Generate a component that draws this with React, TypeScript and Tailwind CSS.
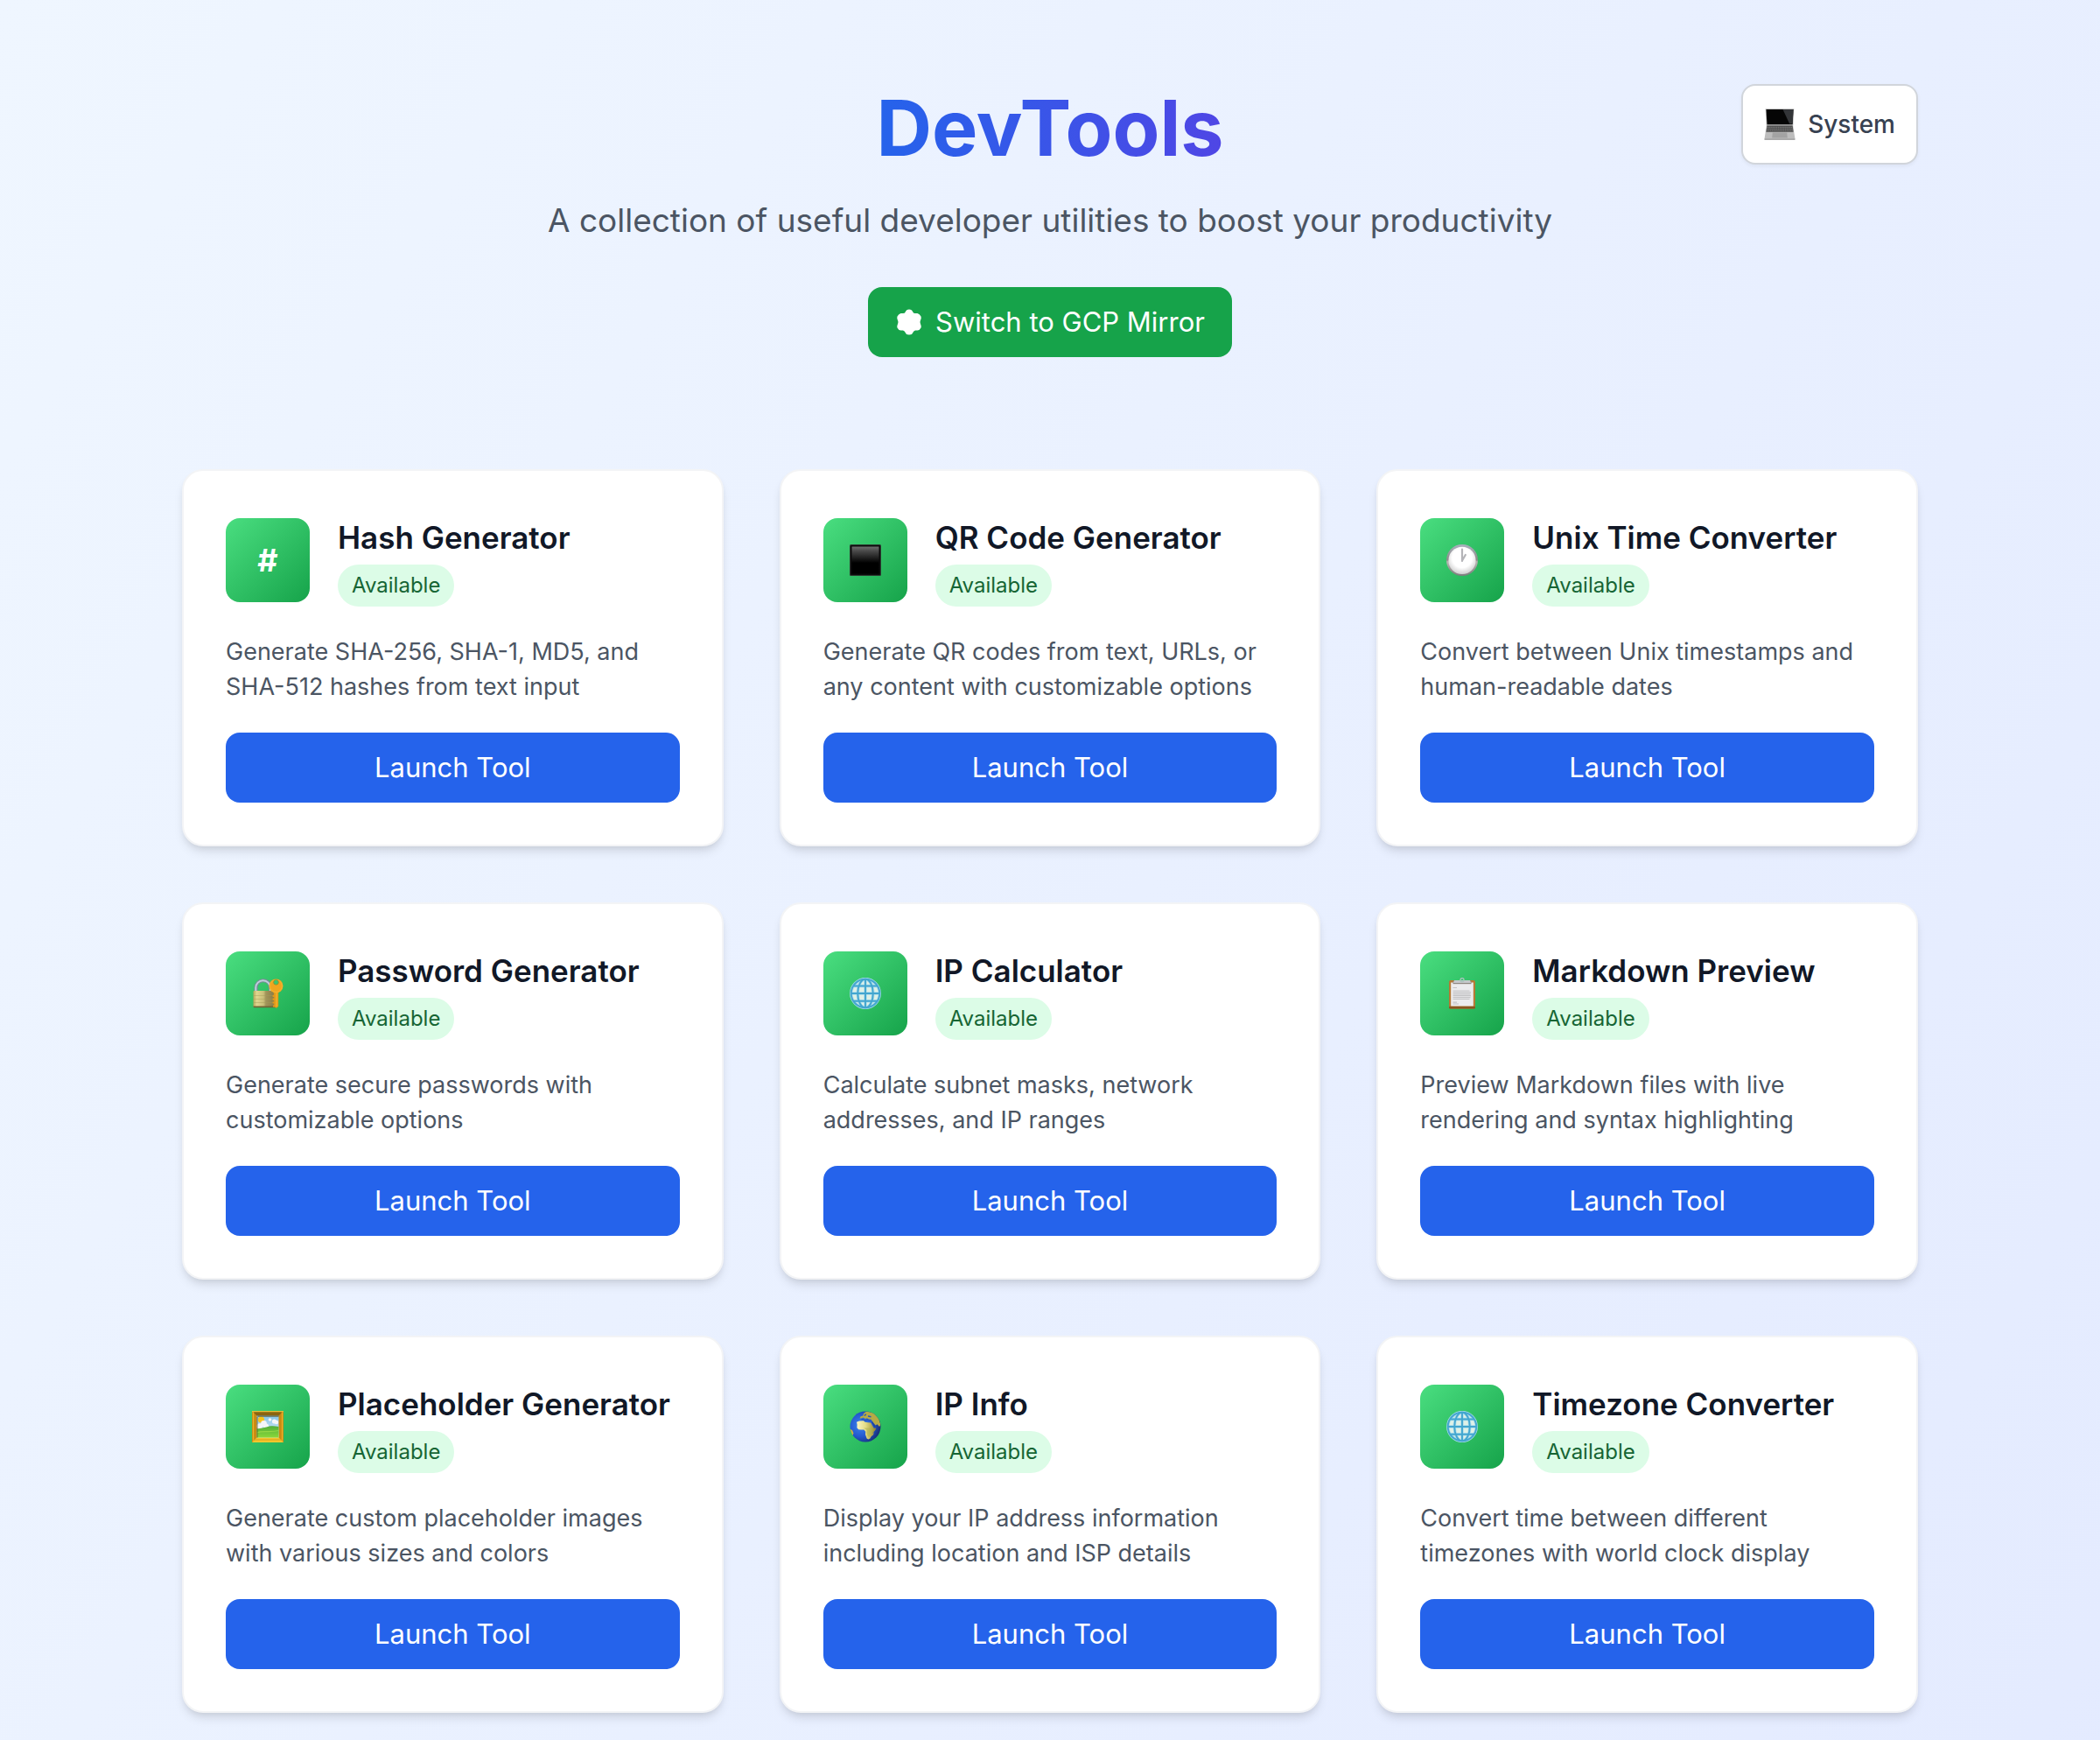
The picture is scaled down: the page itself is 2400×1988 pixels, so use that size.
import type { ReactNode } from "react";

function HashIcon() {
  return <span className="text-4xl font-bold text-white">#</span>;
}

function BlackSquareIcon() {
  return (
    <svg viewBox="0 0 36 36" className="size-9" aria-hidden="true">
      <defs>
        <linearGradient id="square-shine" x1="0" y1="0" x2="0" y2="1">
          <stop offset="0" stopColor="#6e6e6e" />
          <stop offset="0.15" stopColor="#4c4c4c" />
          <stop offset="0.6" stopColor="#000" />
        </linearGradient>
      </defs>
      <rect x="0" y="0" width="36" height="36" rx="1.5" fill="#2c3a31" />
      <rect x="1" y="1" width="34" height="34" rx="1" fill="#0b0b0b" />
      <rect x="2.5" y="2.5" width="31" height="31" fill="url(#square-shine)" />
    </svg>
  );
}

function ClockIcon() {
  return (
    <svg viewBox="0 0 36 36" className="size-9" aria-hidden="true">
      <defs>
        <linearGradient id="clock-rim" x1="0" y1="0" x2="0" y2="1">
          <stop offset="0" stopColor="#a9b0bd" />
          <stop offset="0.5" stopColor="#8d8a88" />
          <stop offset="0.55" stopColor="#b9b6b3" />
          <stop offset="1" stopColor="#7c7c7c" />
        </linearGradient>
        <radialGradient id="clock-face" cx="0.5" cy="0.4" r="0.6">
          <stop offset="0.6" stopColor="#fff" />
          <stop offset="1" stopColor="#cfcfcf" />
        </radialGradient>
      </defs>
      <circle cx="18" cy="18" r="18" fill="url(#clock-rim)" />
      <circle cx="18" cy="18.4" r="15.6" fill="url(#clock-face)" />
      <path d="M18 19V5.500M18 18.500l3.800-6.500" fill="none" stroke="#b4b4b8" strokeWidth="2.2" strokeLinecap="round" />
    </svg>
  );
}

function LockIcon() {
  return (
    <svg viewBox="0 0 36 36" className="size-9" aria-hidden="true">
      <defs>
        <linearGradient id="lock-body" x1="0" y1="0" x2="1" y2="0">
          <stop offset="0" stopColor="#b5a75a" />
          <stop offset="0.15" stopColor="#e0d68f" />
          <stop offset="0.45" stopColor="#c9bd78" />
          <stop offset="0.55" stopColor="#a2945a" />
          <stop offset="1" stopColor="#857640" />
        </linearGradient>
      </defs>
      <path d="M4.500 16V11.500a8.300 8.300 0 0 1 16.600 0V16" fill="none" stroke="#7c8a99" strokeWidth="4" />
      <path d="M4.300 16V11.500a8.300 8.300 0 0 1 16.600 0V16" fill="none" stroke="#bcd0dc" strokeWidth="2" />
      <rect x="1.500" y="15" width="26" height="19" rx="1.200" fill="url(#lock-body)" />
      <path d="M1.800 20.500h25.400M1.800 24.500h25.400M1.800 28.500h25.400" stroke="#a59a58" strokeWidth="0.600" opacity="0.700" />
      <path d="M1.500 32.600h26v.400a1.200 1.200 0 0 1-1.200 1.200H2.700a1.200 1.200 0 0 1-1.200-1.200z" fill="#6f6535" />
      <path d="M24.800 15h5.400v17.800l-2.200 2-2.400-1.200H24v-2.200h1.200v-1.800h-1.600v-2.200h1.600v-1.600h-1.600v-2.200h1.600v-1.600h-1.600v-2h1.200z" fill="#e39b1a" />
      <path d="M28 17v16" stroke="#f6bb35" strokeWidth="1" />
      <circle cx="27.500" cy="9.500" r="8" fill="#efa51f" />
      <circle cx="27.500" cy="9.500" r="7" fill="none" stroke="#f5b93a" strokeWidth="0.800" />
      <circle cx="27.500" cy="5.300" r="2.900" fill="#3cc56c" stroke="#b9780f" strokeWidth="0.600" />
    </svg>
  );
}

function MeridianGlobeIcon() {
  return (
    <svg viewBox="0 0 36 36" className="size-9" aria-hidden="true">
      <circle cx="18" cy="18" r="16.800" fill="#dff1e6" />
      <g fill="none" stroke="#a9dcec" strokeWidth="3.400">
        <circle cx="18" cy="18" r="16.200" />
        <ellipse cx="18" cy="18" rx="8.800" ry="16.200" />
        <path d="M18 1.500v33M1.500 18h33M4 9.500h28M4 26.700h28" />
      </g>
      <g fill="none" stroke="#43a6cf" strokeWidth="1.900">
        <circle cx="18" cy="18" r="16.300" />
        <ellipse cx="18" cy="18" rx="8.800" ry="16.300" />
        <path d="M18 1.500v33M1.500 18h33M4 9.500h28M4 26.700h28" />
      </g>
    </svg>
  );
}

function ClipboardIcon() {
  return (
    <svg viewBox="0 0 36 36" className="size-9" aria-hidden="true">
      <rect x="3" y="3" width="30" height="32.500" rx="1.800" fill="#b57a35" />
      <rect x="3" y="32.800" width="30" height="2.700" rx="1.200" fill="#8a5520" />
      <rect x="5.200" y="5.500" width="25.600" height="27" fill="#ececee" />
      <path d="M7.500 11.500h4.500M7.500 15h19M7.500 16.900h20.500M7.500 18.800h20M7.500 20.700h20.500M7.500 22.600h20M7.500 24.500h19M7.500 28.200h4.500M7.500 30h6.500" stroke="#c4c4c6" strokeWidth="1.200" />
      <path d="M7.500 3.800h21v3.400h-21z" fill="#8e8781" />
      <path d="M9 3h18l1 3H8z" fill="#c5c8cb" />
      <circle cx="18" cy="2.600" r="2" fill="none" stroke="#a9c3bd" strokeWidth="1.400" />
    </svg>
  );
}

function FramedPictureIcon() {
  return (
    <svg viewBox="0 0 36 36" className="size-9" aria-hidden="true">
      <defs>
        <linearGradient id="picture-sky" x1="0" y1="0" x2="0" y2="1">
          <stop offset="0" stopColor="#86c5ea" />
          <stop offset="1" stopColor="#e6f0f6" />
        </linearGradient>
        <linearGradient id="picture-grass" x1="0" y1="0" x2="0" y2="1">
          <stop offset="0" stopColor="#4fae3a" />
          <stop offset="1" stopColor="#8bd83a" />
        </linearGradient>
      </defs>
      <rect width="36" height="36" fill="#c98a12" />
      <path d="M0 0h36l-6 6H6z" fill="#8a6410" />
      <path d="M0 0h36v1.300H0z" fill="#e8bd3c" />
      <path d="M0 36h36l-6-6H6z" fill="#f4c62c" />
      <path d="M1.500 1.500v33M34.500 1.500v33" stroke="#e9b32a" strokeWidth="1.200" />
      <path d="M1.500 33h33" stroke="#d59a18" strokeWidth="0.900" />
      <rect x="5.500" y="5.500" width="25" height="25" fill="url(#picture-sky)" />
      <circle cx="10.500" cy="10" r="3.600" fill="#f7c51b" />
      <g fill="#f4f5f8">
        <circle cx="9" cy="17.500" r="3.300" />
        <circle cx="13.500" cy="14.500" r="3.400" />
        <circle cx="16" cy="17.500" r="3" />
        <circle cx="20.500" cy="10" r="1.800" />
        <circle cx="25.500" cy="12" r="2.600" />
        <circle cx="28" cy="13" r="2.200" />
      </g>
      <path d="M5.500 20.500c5-.800 8-1 11-2 4-1.600 8-1.800 14-.500v12.500h-25z" fill="url(#picture-grass)" />
      <path d="M5.500 25c7-3 14 0 25-2.500" fill="none" stroke="#a4e04a" strokeWidth="1.200" opacity="0.700" />
      <path d="M5.500 5.500h25v1.300h-25zM5.500 5.500v25h1v-25z" fill="#5d470f" opacity="0.700" />
    </svg>
  );
}

function EarthIcon() {
  return (
    <svg viewBox="0 0 36 36" className="size-9" aria-hidden="true">
      <defs>
        <radialGradient id="earth-sea" cx="0.35" cy="0.45" r="0.68">
          <stop offset="0" stopColor="#3f86ee" />
          <stop offset="0.55" stopColor="#2358cf" />
          <stop offset="1" stopColor="#152a6d" />
        </radialGradient>
        <linearGradient id="earth-land" x1="0" y1="0.3" x2="1" y2="0.3">
          <stop offset="0" stopColor="#fbf6c4" />
          <stop offset="0.45" stopColor="#e3dc86" />
          <stop offset="1" stopColor="#8f8328" />
        </linearGradient>
        <clipPath id="earth-disc">
          <circle cx="18" cy="18" r="17.500" />
        </clipPath>
      </defs>
      <circle cx="18" cy="18" r="17.500" fill="url(#earth-sea)" />
      <g clipPath="url(#earth-disc)">
        <path d="M11.500 8.500l1.200-2.300 2.600-.800.600-2.400 3-2.300L28 2l5 6 2.500 8-1.500 2-2.500-2.800-1.800 1.300-3.700-4.500-1.500-2.200-3-.300-1.500-1.300-2 .800-2.500-1.500-2 1z" fill="#b6aa45" />
        <path d="M13.500 9.300l4.500 1.700 2.500-.900 3 1M21 6l3.500.800M16.800 5.500l2-1.700" fill="none" stroke="#2455bd" strokeWidth="1.400" />
        <path d="M8 12.800l3-1.200 5-.300 1.500 1.400 3.500.600 3.200.200 1.800 3.200 1.800 3 2.600-.200-1 2.600-2.800 2.800-.200 2.900-1.700 1.500-1.300 2.200-2 .900-1.800-.900-1.600-4.500.200-3.200-1.800-2.200h-3.400l-2.800-.300-1.800-2 .200-3.800z" fill="url(#earth-land)" />
        <path d="M16.200 19.500l9 0 1.500 3-2.200 3.500-2.300 4-1.500-1-1.200-4 .2-3z" fill="#a9b04a" opacity="0.500" />
        <path d="M25.600 12.500l3 5.200" stroke="#1f3f92" strokeWidth="1.100" />
        <path d="M26.500 25.500l1.200-1.500-.500 3-1.500 1.500z" fill="#b9a943" />
        <path d="M0 20.500l3 1.500 1.500 3.500-1.300 3-3.200-2z" fill="#c4b53f" />
      </g>
    </svg>
  );
}

function LaptopIcon() {
  return (
    <svg viewBox="0 0 36 36" className="size-9" aria-hidden="true">
      <path d="M1.700.300h32.600l-1 19H2.700z" fill="#b8b8b8" />
      <path d="M2.500 1h31l-.900 17.500H3.500z" fill="#050505" />
      <path d="M21.500 1h12l-.900 16.500h-3.400z" fill="#333538" />
      <path d="M3 18.500h30l2.500 16.300H.500z" fill="#bdbdbd" />
      <path d="M3.400 19.500h29.200l1 7.200H2.400z" fill="#4a4a4a" />
      <path d="M3.200 21.300h29.600M3 23.200h30M2.700 25.100h30.600" stroke="#a5a5a5" strokeWidth="0.600" strokeDasharray="1.500 0.600" />
      <path d="M9.800 27.600h16.400l.600 5.800H9.200z" fill="#a3a3a3" />
      <path d="M.500 34.600h35v1.200H.500z" fill="#8c8c8c" />
    </svg>
  );
}

function MirrorIcon() {
  return (
    <svg viewBox="0 0 32 32" className="size-8" fill="currentColor" aria-hidden="true">
      <path d="M11.700 4.500Q12.800 1.500 16 1.500T20.300 4.500Q21 6 23 6H25.500Q28 6.500 29.500 9.500C30.500 12 28.500 14 28.500 16S30.500 20.500 29.500 22.500Q28 25.500 25.500 25.500H23Q21 26 20.300 28Q19.500 30.500 16 30.500T11.700 28Q11 26 9 25.500H6.500Q4 25.500 2.500 22.500C1.500 20.500 3.500 18 3.500 16S1.500 12 2.500 9.500Q4 6.500 6.500 6H9Q11 6 11.700 4.500Z" />
    </svg>
  );
}

type Tool = { name: string; description: string; icon: ReactNode };

const tools: Tool[] = [
  { name: "Hash Generator", description: "Generate SHA-256, SHA-1, MD5, and SHA-512 hashes from text input", icon: <HashIcon /> },
  { name: "QR Code Generator", description: "Generate QR codes from text, URLs, or any content with customizable options", icon: <BlackSquareIcon /> },
  { name: "Unix Time Converter", description: "Convert between Unix timestamps and human-readable dates", icon: <ClockIcon /> },
  { name: "Password Generator", description: "Generate secure passwords with customizable options", icon: <LockIcon /> },
  { name: "IP Calculator", description: "Calculate subnet masks, network addresses, and IP ranges", icon: <MeridianGlobeIcon /> },
  { name: "Markdown Preview", description: "Preview Markdown files with live rendering and syntax highlighting", icon: <ClipboardIcon /> },
  { name: "Placeholder Generator", description: "Generate custom placeholder images with various sizes and colors", icon: <FramedPictureIcon /> },
  { name: "IP Info", description: "Display your IP address information including location and ISP details", icon: <EarthIcon /> },
  { name: "Timezone Converter", description: "Convert time between different timezones with world clock display", icon: <MeridianGlobeIcon /> },
];

function ToolCard({ name, description, icon }: Tool) {
  return (
    <article className="rounded-3xl border-2 border-[#f3f4f6] bg-white p-12 shadow-[0_8px_12px_-2px_rgba(0,0,0,0.1),0_4px_8px_-4px_rgba(0,0,0,0.1)]">
      <div className="flex items-center gap-8">
        <div className="flex size-24 shrink-0 items-center justify-center rounded-2xl bg-linear-to-br/srgb from-[#4ade80] to-[#16a34a]">
          {icon}
        </div>
        <div className="flex flex-col items-start gap-[3px]">
          <h2 className="text-[35px] leading-[56px] font-semibold text-[#111827]">{name}</h2>
          <span className="rounded-full bg-[#dcfce7] px-4 py-2 text-2xl leading-8 text-[#166534]">Available</span>
        </div>
      </div>
      <p className="mt-8 text-[27px] leading-10 text-[#4b5563]">{description}</p>
      <a
        href="#"
        aria-label={`Launch Tool: ${name}`}
        className="mt-8 block rounded-2xl bg-[#2563eb] py-4 text-center text-[31px] leading-[48px] text-white"
      >
        Launch Tool
      </a>
    </article>
  );
}

export default function App() {
  return (
    <div className="min-h-screen overflow-hidden bg-linear-to-br/srgb from-[#eff6ff] to-[#e0e7ff] bg-[length:100%_200%] font-['Inter',sans-serif]">
      <div className="mx-auto max-w-[2048px] px-8 pt-24 pb-8">
        <header className="grid grid-cols-[1fr_auto_1fr]">
          <div className="col-start-2 flex flex-col items-center">
            <h1 className="bg-linear-to-r/srgb from-[#2563eb] to-[#4f46e5] bg-clip-text text-[88px] leading-[100px] font-bold text-transparent">
              DevTools
            </h1>
            <p className="mt-7 text-[37px] leading-[56px] text-[#4b5563]">
              A collection of useful developer utilities to boost your productivity
            </p>
            <button
              type="button"
              className="mt-12 flex items-center gap-3.5 rounded-2xl bg-[#16a34a] px-[31px] py-4 text-[31px] leading-[48px] text-white"
            >
              <MirrorIcon />
              Switch to GCP Mirror
            </button>
          </div>
          <button
            type="button"
            className="flex items-center gap-3.5 self-start justify-self-end rounded-2xl border-2 border-[#d1d5db] bg-white p-6 text-[28px] leading-10 font-medium text-[#374151] shadow-[0_2px_4px_rgba(0,0,0,0.05)]"
          >
            <LaptopIcon />
            System
          </button>
        </header>
        <main className="mt-32 grid grid-cols-3 gap-16">
          {tools.map((tool) => (
            <ToolCard key={tool.name} {...tool} />
          ))}
        </main>
      </div>
    </div>
  );
}
